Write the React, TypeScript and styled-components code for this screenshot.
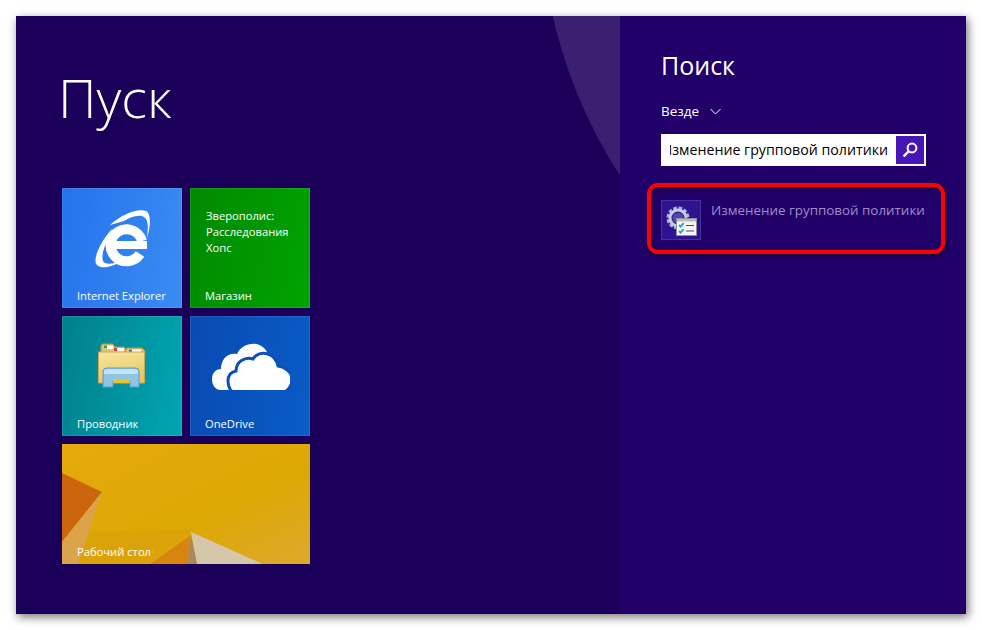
import React from 'react';
import styled, { createGlobalStyle } from 'styled-components';

const GlobalStyle = createGlobalStyle`
  html, body {
    margin: 0;
    padding: 0;
    background: #ffffff;
    font-family: "Open Sans", "Noto Sans", "Liberation Sans", sans-serif;
  }
`;

const Page = styled.div`
  width: 982px;
  height: 630px;
  box-sizing: border-box;
  padding: 16px;
  overflow: hidden;
`;

const Screen = styled.div`
  display: flex;
  width: 950px;
  height: 598px;
  box-shadow: 2px 3px 9px rgba(0, 0, 0, 0.55);
`;

const StartPanel = styled.section`
  position: relative;
  overflow: hidden;
  box-sizing: border-box;
  width: 604px;
  padding: 52px 0 0 46px;
  background: #1a0058;
`;

const BackdropCircle = styled.div`
  position: absolute;
  left: 525px;
  top: -591px;
  width: 970px;
  height: 970px;
  border-radius: 50%;
  background: #3a2070;
`;

const StartTitle = styled.h1`
  margin: 0 0 62px -4px;
  height: 58px;
  font-size: 54px;
  line-height: 58px;
  font-weight: 300;
  color: #ffffff;
`;

const TileGrid = styled.div`
  display: grid;
  grid-template-columns: 120px 120px;
  grid-auto-rows: 120px;
  gap: 8px;
`;

const Tile = styled.div<{ $from: string; $to: string; $wide?: boolean }>`
  position: relative;
  overflow: hidden;
  display: flex;
  align-items: center;
  justify-content: center;
  box-sizing: border-box;
  grid-column: ${(p) => (p.$wide ? 'span 2' : 'span 1')};
  background: linear-gradient(100deg, ${(p) => p.$from}, ${(p) => p.$to});
  box-shadow: inset 0 0 0 1px rgba(255, 255, 255, 0.1);
  color: #ffffff;
`;

const TileLabel = styled.span`
  position: absolute;
  left: 15px;
  bottom: 4px;
  font-size: 11.2px;
  line-height: 16px;
  color: #ffffff;
`;

const TileIcon = styled.div<{ $lift: number; $shift?: number }>`
  display: flex;
  margin-bottom: ${(p) => p.$lift}px;
  margin-left: ${(p) => p.$shift ?? 0}px;
`;

const StoreText = styled.div`
  align-self: flex-start;
  width: 100%;
  box-sizing: border-box;
  padding: 20px 0 0 16px;
  font-size: 11.2px;
  line-height: 16px;
`;

const TileArt = styled.svg`
  position: absolute;
  inset: 0;
`;

const SearchPanel = styled.aside`
  box-sizing: border-box;
  width: 346px;
  padding: 31px 0 0 41px;
  background: #210069;
  color: #ffffff;
`;

const SearchTitle = styled.h2`
  margin: 0;
  font-size: 25px;
  line-height: 36px;
  font-weight: 400;
`;

const Scope = styled.div`
  display: flex;
  align-items: center;
  gap: 11px;
  margin-top: 18px;
  height: 20px;
  font-size: 13.5px;
  line-height: 20px;
`;

const SearchBox = styled.div`
  display: flex;
  align-items: center;
  box-sizing: border-box;
  width: 265px;
  height: 32px;
  margin-top: 13px;
  padding: 2px;
  background: #ffffff;
`;

const SearchValue = styled.div`
  flex: 1;
  min-width: 0;
  overflow: hidden;
  display: flex;
  justify-content: flex-end;
  margin-left: 7px;
  padding-right: 8px;
  font-size: 14.2px;
  line-height: 28px;
  white-space: nowrap;
  color: #000000;
`;

const SearchButton = styled.div`
  display: flex;
  align-items: center;
  justify-content: center;
  flex: none;
  width: 28px;
  height: 28px;
  background: #4617b4;
`;

const ResultOutline = styled.div`
  display: flex;
  align-items: flex-start;
  gap: 10px;
  box-sizing: border-box;
  width: 298px;
  height: 71px;
  margin: 17px 0 0 -14px;
  padding: 13px 0 0 10px;
  border: 4px solid #ff0000;
  border-radius: 11px;
  box-shadow: 1px 2px 5px rgba(0, 0, 0, 0.5), inset 1px 2px 5px rgba(0, 0, 0, 0.35);
`;

const ResultIcon = styled.div`
  display: flex;
  align-items: center;
  justify-content: center;
  flex: none;
  box-sizing: border-box;
  width: 40px;
  height: 40px;
  background: #2f1290;
  border: 1px solid #46309c;
`;

const ResultText = styled.div`
  font-size: 13.4px;
  line-height: 20px;
  white-space: nowrap;
  color: #a08cc8;
`;

function IeLogo() {
  return (
    <svg width="56" height="58" viewBox="0 0 56 58">
      <path d="M46 44A16 16 0 1 1 48 31" fill="none" stroke="#ffffff" strokeWidth="10" />
      <rect x="18" y="31" width="35" height="8" fill="#ffffff" />
      <path d="M16 15C28 4 44-2 52 1C57 3 57 16 53 28C54 18 55 10 50 7C45 4 36 7 30 11Z" fill="#ffffff" />
      <path d="M18 19C6 32-2 50 3 55C8 60 20 56 28 51C19 54 11 55 9 51C7 46 10 36 15 28Z" fill="#ffffff" />
    </svg>
  );
}

function DesktopArt() {
  return (
    <TileArt width="248" height="120" viewBox="0 0 248 120">
      <defs>
        <linearGradient id="desk" x1="0" y1="0" x2="1" y2="1">
          <stop offset="0" stopColor="#e6aa0c" />
          <stop offset="0.6" stopColor="#dca804" />
          <stop offset="1" stopColor="#dea92c" />
        </linearGradient>
      </defs>
      <rect width="248" height="120" fill="url(#desk)" />
      <polygon points="0,88 130,86 88,120 0,120" fill="#d99a10" opacity="0.4" />
      <polygon points="0,29 40,48 0,98" fill="#cc660c" />
      <polygon points="0,98 40,48 16,120 0,120" fill="#dca44a" />
      <polygon points="129,91 88,120 125,120" fill="#d98410" />
      <polygon points="129,91 125,120 135,120" fill="#a98a5a" />
      <polygon points="129,88 201,120 135,120" fill="#d6c6aa" />
    </TileArt>
  );
}

function ExplorerArt() {
  return (
    <svg width="48" height="47" viewBox="0 0 48 47">
      <defs>
        <linearGradient id="folderBody" x1="0" y1="0" x2="0.3" y2="1">
          <stop offset="0" stopColor="#f8e8a4" />
          <stop offset="1" stopColor="#e6c664" />
        </linearGradient>
      </defs>
      <path d="M3 5q0-2 2-2h10l2 3h9l3 4v4H3z" fill="#e8c36a" stroke="#b8913f" />
      <rect x="6" y="4.5" width="9" height="3.5" fill="#ffffff" />
      <rect x="6" y="4.5" width="3" height="3" fill="#3a9a4a" />
      <rect x="16" y="7" width="10" height="3.5" fill="#ffffff" />
      <rect x="16" y="7" width="3" height="3" fill="#d8402a" />
      <path d="M27 10l2-3h15l3 3v4H27z" fill="#e8c36a" stroke="#b8913f" />
      <rect x="31" y="8.5" width="12" height="3.5" fill="#ffffff" />
      <rect x="31" y="8.5" width="3" height="3" fill="#2a80c8" />
      <path d="M0.5 11h46v31H0.5z" fill="url(#folderBody)" stroke="#c8a858" />
      <path d="M5 30q0-3 4-3h28q4 0 4 3v16H32v-7H15v7H5z" fill="#8ec5e4" stroke="#5d9cc4" />
      <path d="M6 30q0-2 4-2h26q4 0 4 2v3H6z" fill="#c4e2f2" />
      <rect x="15" y="38" width="17" height="4" fill="#f0c02a" />
    </svg>
  );
}

function OneDriveArt() {
  return (
    <svg width="78" height="47" viewBox="0 0 78 47">
      <path
        d="M9 47C3 47 0 42 0 36c0-6 4-10 9-10 0-10 7-17 16-15 3-7 11-11 19-10 7 1 12 7 13 14l-20 32z"
        fill="#ffffff"
      />
      <path
        d="M24 50c-5 0-8-6-8-12 0-6 3-9 8-10 0-9 9-15 17-12 3-5 9-7 15-5 6 2 9 7 10 12 7 1 14 6 14 13 0 6-3 14-14 14z"
        fill="#ffffff"
        stroke="#0a50b8"
        strokeWidth="3"
      />
    </svg>
  );
}

function SearchGlyph() {
  return (
    <svg width="16" height="16" viewBox="0 0 16 16">
      <circle cx="10" cy="6" r="4.4" fill="none" stroke="#ffffff" strokeWidth="2" />
      <line x1="6.6" y1="9.4" x2="1.6" y2="14.4" stroke="#ffffff" strokeWidth="2.4" />
    </svg>
  );
}

function Chevron() {
  return (
    <svg width="11" height="7" viewBox="0 0 11 7">
      <path d="M0.5 1l5 5 5-5" fill="none" stroke="#ffffff" strokeWidth="1" />
    </svg>
  );
}

function PolicyGlyph() {
  return (
    <svg width="38" height="38" viewBox="0 0 38 38">
      <circle cx="16" cy="17" r="9.5" fill="none" stroke="#aab4da" strokeWidth="4" strokeDasharray="3.4 1.6" />
      <circle cx="16" cy="17" r="8" fill="none" stroke="#c4cce8" strokeWidth="3" />
      <circle cx="16" cy="17" r="5.5" fill="#4a4aa4" />
      <rect x="14.5" y="17.5" width="20" height="17" fill="#f4f4f4" stroke="#8f8f9c" />
      <rect x="15" y="18" width="19" height="2.5" fill="#b9b9c4" />
      <path d="M17 24l1.6 1.6 3-3.4M17 30l1.6 1.6 3-3.4" fill="none" stroke="#1da0d8" strokeWidth="1.8" />
      <path d="M24 24.5h8M24 30h8" stroke="#4a4a78" strokeWidth="1.2" />
    </svg>
  );
}

export default function App() {
  return (
    <Page>
      <GlobalStyle />
      <Screen>
        <StartPanel>
          <BackdropCircle />
          <StartTitle>Пуск</StartTitle>
          <TileGrid>
            <Tile $from="#2672ec" $to="#3a8cf2">
              <TileIcon $lift={18}>
                <IeLogo />
              </TileIcon>
              <TileLabel>Internet Explorer</TileLabel>
            </Tile>
            <Tile $from="#008a00" $to="#00a300">
              <StoreText>
                Зверополис:
                <br />
                Расследования
                <br />
                Хопс
              </StoreText>
              <TileLabel>Магазин</TileLabel>
            </Tile>
            <Tile $from="#00808c" $to="#00a6b2">
              <TileIcon $lift={24}>
                <ExplorerArt />
              </TileIcon>
              <TileLabel>Проводник</TileLabel>
            </Tile>
            <Tile $from="#094ab2" $to="#0a5cc6">
              <TileIcon $lift={19} $shift={2}>
                <OneDriveArt />
              </TileIcon>
              <TileLabel>OneDrive</TileLabel>
            </Tile>
            <Tile $from="#e6aa0c" $to="#dea92c" $wide>
              <DesktopArt />
              <TileLabel>Рабочий стол</TileLabel>
            </Tile>
          </TileGrid>
        </StartPanel>
        <SearchPanel>
          <SearchTitle>Поиск</SearchTitle>
          <Scope>
            Везде
            <Chevron />
          </Scope>
          <SearchBox>
            <SearchValue>Изменение групповой политики</SearchValue>
            <SearchButton>
              <SearchGlyph />
            </SearchButton>
          </SearchBox>
          <ResultOutline>
            <ResultIcon>
              <PolicyGlyph />
            </ResultIcon>
            <ResultText>Изменение групповой политики</ResultText>
          </ResultOutline>
        </SearchPanel>
      </Screen>
    </Page>
  );
}
